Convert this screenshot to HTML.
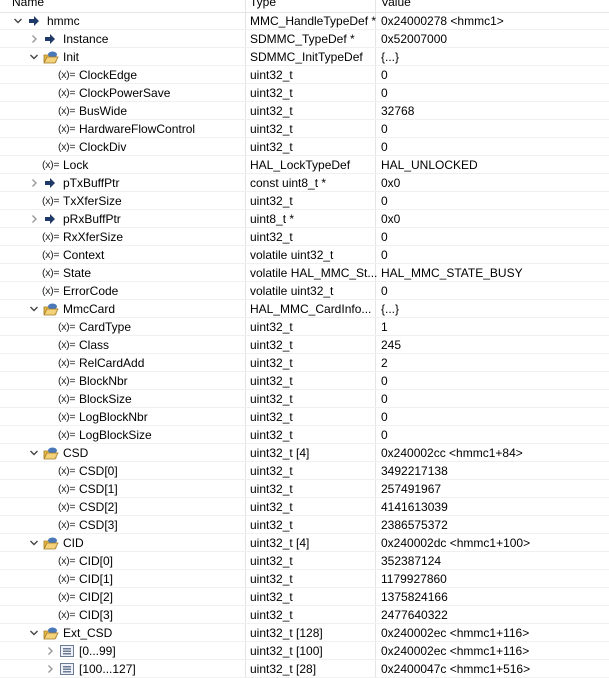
<!DOCTYPE html>
<html><head><meta charset="utf-8"><style>
body{margin:0;width:609px;height:677px;overflow:hidden;background:#fff;font-family:"Liberation Sans",sans-serif;font-size:12px;color:#000;position:relative}
.hd{position:absolute;left:0;top:0;width:609px;height:12px;border-bottom:1px solid #e5e5e5;overflow:hidden}
.hd span{position:absolute;top:-7px;line-height:18px;color:#000}
.vl{position:absolute;top:0;width:1px;height:677px;background:#e5e5e5}
.r{position:absolute;left:0;width:609px;height:17px;border-bottom:1px solid #f0f0f0;line-height:18px;white-space:nowrap}
.r span{position:absolute;top:0}
.t{left:250px}.v{left:381px}
.ch{position:absolute;top:4px;width:10px;height:10px}
.ic{position:absolute;top:2px}
.x{font-size:10.5px;color:#222;letter-spacing:-.3px}
</style></head><body>
<svg width="0" height="0" style="position:absolute">
<defs>
<symbol id="down" viewBox="0 0 10 10"><polyline points="1.5,3 5,6.5 8.5,3" fill="none" stroke="#444" stroke-width="1.4"/></symbol>
<symbol id="right" viewBox="0 0 10 10"><polyline points="3.5,1.5 7,5 3.5,8.5" fill="none" stroke="#999" stroke-width="1.4"/></symbol>
<symbol id="ptr" viewBox="0 0 14 14"><path d="M2,5 H7 V2 L12,7 L7,12 V9 H2 Z" fill="#1f3a68"/></symbol>
<symbol id="st" viewBox="0 0 16 14"><path d="M1,5 H5 L6,4 H13 V12 H1 Z" fill="#e6b84a" stroke="#a07a20" stroke-width=".8"/><ellipse cx="9.5" cy="4.5" rx="4.5" ry="3" fill="#4a78b8"/><path d="M1,13 L4,7 H15 L12,13 Z" fill="#f5d27a" stroke="#a07a20" stroke-width=".8"/></symbol>
<symbol id="ar" viewBox="0 0 16 14"><rect x="1.5" y="1.5" width="13" height="11" fill="#eef2f8" stroke="#6b7b93"/><rect x="4" y="4" width="8" height="1.5" fill="#6b7b93"/><rect x="4" y="6.5" width="8" height="1.5" fill="#6b7b93"/><rect x="4" y="9" width="8" height="1.5" fill="#6b7b93"/></symbol>
</defs></svg>
<div class="hd"><span style="left:12px">Name</span><span style="left:250px">Type</span><span style="left:381px">Value</span></div>
<div class="vl" style="left:245px"></div><div class="vl" style="left:375px"></div>

<div class="r" style="top:12px"><svg class="ch" style="left:13px"><use href="#down"/></svg><svg class="ic" style="left:27px" width="14" height="14"><use href="#ptr"/></svg><span style="left:47px">hmmc</span><span class="t">MMC_HandleTypeDef *</span><span class="v">0x24000278 &lt;hmmc1&gt;</span></div>
<div class="r" style="top:30px"><svg class="ch" style="left:29px"><use href="#right"/></svg><svg class="ic" style="left:43px" width="14" height="14"><use href="#ptr"/></svg><span style="left:63px">Instance</span><span class="t">SDMMC_TypeDef *</span><span class="v">0x52007000</span></div>
<div class="r" style="top:48px"><svg class="ch" style="left:29px"><use href="#down"/></svg><svg class="ic" style="left:43px" width="16" height="14"><use href="#st"/></svg><span style="left:63px">Init</span><span class="t">SDMMC_InitTypeDef</span><span class="v">{...}</span></div>
<div class="r" style="top:66px"><span class="x" style="left:58px">(x)=</span><span style="left:79px">ClockEdge</span><span class="t">uint32_t</span><span class="v">0</span></div>
<div class="r" style="top:84px"><span class="x" style="left:58px">(x)=</span><span style="left:79px">ClockPowerSave</span><span class="t">uint32_t</span><span class="v">0</span></div>
<div class="r" style="top:102px"><span class="x" style="left:58px">(x)=</span><span style="left:79px">BusWide</span><span class="t">uint32_t</span><span class="v">32768</span></div>
<div class="r" style="top:120px"><span class="x" style="left:58px">(x)=</span><span style="left:79px">HardwareFlowControl</span><span class="t">uint32_t</span><span class="v">0</span></div>
<div class="r" style="top:138px"><span class="x" style="left:58px">(x)=</span><span style="left:79px">ClockDiv</span><span class="t">uint32_t</span><span class="v">0</span></div>
<div class="r" style="top:156px"><span class="x" style="left:42px">(x)=</span><span style="left:63px">Lock</span><span class="t">HAL_LockTypeDef</span><span class="v">HAL_UNLOCKED</span></div>
<div class="r" style="top:174px"><svg class="ch" style="left:29px"><use href="#right"/></svg><svg class="ic" style="left:43px" width="14" height="14"><use href="#ptr"/></svg><span style="left:63px">pTxBuffPtr</span><span class="t">const uint8_t *</span><span class="v">0x0</span></div>
<div class="r" style="top:192px"><span class="x" style="left:42px">(x)=</span><span style="left:63px">TxXferSize</span><span class="t">uint32_t</span><span class="v">0</span></div>
<div class="r" style="top:210px"><svg class="ch" style="left:29px"><use href="#right"/></svg><svg class="ic" style="left:43px" width="14" height="14"><use href="#ptr"/></svg><span style="left:63px">pRxBuffPtr</span><span class="t">uint8_t *</span><span class="v">0x0</span></div>
<div class="r" style="top:228px"><span class="x" style="left:42px">(x)=</span><span style="left:63px">RxXferSize</span><span class="t">uint32_t</span><span class="v">0</span></div>
<div class="r" style="top:246px"><span class="x" style="left:42px">(x)=</span><span style="left:63px">Context</span><span class="t">volatile uint32_t</span><span class="v">0</span></div>
<div class="r" style="top:264px"><span class="x" style="left:42px">(x)=</span><span style="left:63px">State</span><span class="t">volatile HAL_MMC_St...</span><span class="v">HAL_MMC_STATE_BUSY</span></div>
<div class="r" style="top:282px"><span class="x" style="left:42px">(x)=</span><span style="left:63px">ErrorCode</span><span class="t">volatile uint32_t</span><span class="v">0</span></div>
<div class="r" style="top:300px"><svg class="ch" style="left:29px"><use href="#down"/></svg><svg class="ic" style="left:43px" width="16" height="14"><use href="#st"/></svg><span style="left:63px">MmcCard</span><span class="t">HAL_MMC_CardInfo...</span><span class="v">{...}</span></div>
<div class="r" style="top:318px"><span class="x" style="left:58px">(x)=</span><span style="left:79px">CardType</span><span class="t">uint32_t</span><span class="v">1</span></div>
<div class="r" style="top:336px"><span class="x" style="left:58px">(x)=</span><span style="left:79px">Class</span><span class="t">uint32_t</span><span class="v">245</span></div>
<div class="r" style="top:354px"><span class="x" style="left:58px">(x)=</span><span style="left:79px">RelCardAdd</span><span class="t">uint32_t</span><span class="v">2</span></div>
<div class="r" style="top:372px"><span class="x" style="left:58px">(x)=</span><span style="left:79px">BlockNbr</span><span class="t">uint32_t</span><span class="v">0</span></div>
<div class="r" style="top:390px"><span class="x" style="left:58px">(x)=</span><span style="left:79px">BlockSize</span><span class="t">uint32_t</span><span class="v">0</span></div>
<div class="r" style="top:408px"><span class="x" style="left:58px">(x)=</span><span style="left:79px">LogBlockNbr</span><span class="t">uint32_t</span><span class="v">0</span></div>
<div class="r" style="top:426px"><span class="x" style="left:58px">(x)=</span><span style="left:79px">LogBlockSize</span><span class="t">uint32_t</span><span class="v">0</span></div>
<div class="r" style="top:444px"><svg class="ch" style="left:29px"><use href="#down"/></svg><svg class="ic" style="left:43px" width="16" height="14"><use href="#st"/></svg><span style="left:63px">CSD</span><span class="t">uint32_t [4]</span><span class="v">0x240002cc &lt;hmmc1+84&gt;</span></div>
<div class="r" style="top:462px"><span class="x" style="left:58px">(x)=</span><span style="left:79px">CSD[0]</span><span class="t">uint32_t</span><span class="v">3492217138</span></div>
<div class="r" style="top:480px"><span class="x" style="left:58px">(x)=</span><span style="left:79px">CSD[1]</span><span class="t">uint32_t</span><span class="v">257491967</span></div>
<div class="r" style="top:498px"><span class="x" style="left:58px">(x)=</span><span style="left:79px">CSD[2]</span><span class="t">uint32_t</span><span class="v">4141613039</span></div>
<div class="r" style="top:516px"><span class="x" style="left:58px">(x)=</span><span style="left:79px">CSD[3]</span><span class="t">uint32_t</span><span class="v">2386575372</span></div>
<div class="r" style="top:534px"><svg class="ch" style="left:29px"><use href="#down"/></svg><svg class="ic" style="left:43px" width="16" height="14"><use href="#st"/></svg><span style="left:63px">CID</span><span class="t">uint32_t [4]</span><span class="v">0x240002dc &lt;hmmc1+100&gt;</span></div>
<div class="r" style="top:552px"><span class="x" style="left:58px">(x)=</span><span style="left:79px">CID[0]</span><span class="t">uint32_t</span><span class="v">352387124</span></div>
<div class="r" style="top:570px"><span class="x" style="left:58px">(x)=</span><span style="left:79px">CID[1]</span><span class="t">uint32_t</span><span class="v">1179927860</span></div>
<div class="r" style="top:588px"><span class="x" style="left:58px">(x)=</span><span style="left:79px">CID[2]</span><span class="t">uint32_t</span><span class="v">1375824166</span></div>
<div class="r" style="top:606px"><span class="x" style="left:58px">(x)=</span><span style="left:79px">CID[3]</span><span class="t">uint32_t</span><span class="v">2477640322</span></div>
<div class="r" style="top:624px"><svg class="ch" style="left:29px"><use href="#down"/></svg><svg class="ic" style="left:43px" width="16" height="14"><use href="#st"/></svg><span style="left:63px">Ext_CSD</span><span class="t">uint32_t [128]</span><span class="v">0x240002ec &lt;hmmc1+116&gt;</span></div>
<div class="r" style="top:642px"><svg class="ch" style="left:45px"><use href="#right"/></svg><svg class="ic" style="left:59px" width="16" height="14"><use href="#ar"/></svg><span style="left:79px">[0...99]</span><span class="t">uint32_t [100]</span><span class="v">0x240002ec &lt;hmmc1+116&gt;</span></div>
<div class="r" style="top:660px"><svg class="ch" style="left:45px"><use href="#right"/></svg><svg class="ic" style="left:59px" width="16" height="14"><use href="#ar"/></svg><span style="left:79px">[100...127]</span><span class="t">uint32_t [28]</span><span class="v">0x2400047c &lt;hmmc1+516&gt;</span></div>
</body></html>
